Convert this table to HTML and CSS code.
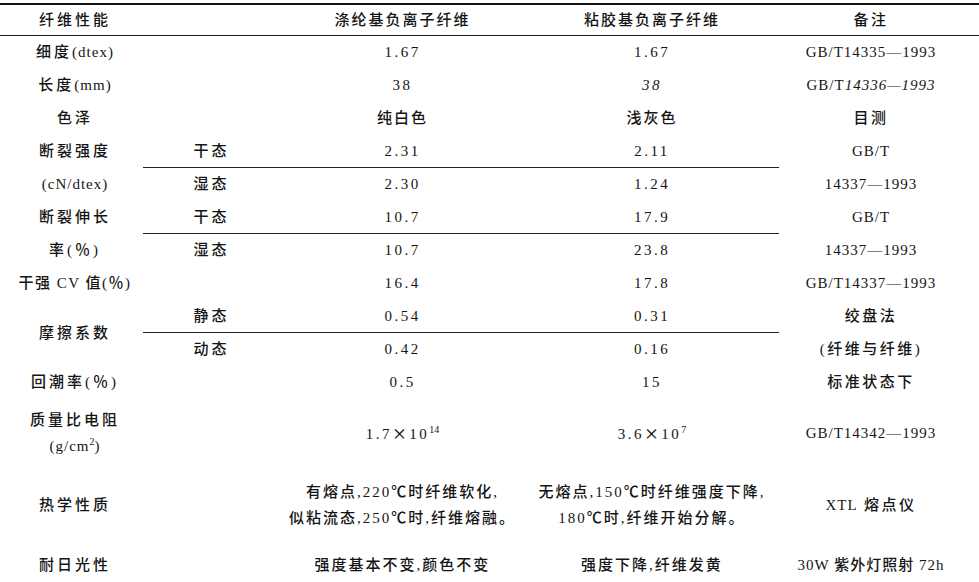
FILE: index.html
```html
<!DOCTYPE html>
<html lang="zh-CN">
<head>
<meta charset="utf-8">
<title>负离子纤维性能</title>
<link rel="stylesheet" href="styles.css">
</head>
<body>
<div class="table">
  <div class="c c1 hd">纤维性能</div>
  <div class="c c2 hd"></div>
  <div class="c c3 hd">涤纶基负离子纤维</div>
  <div class="c c4 hd">粘胶基负离子纤维</div>
  <div class="c c5 hd cj">备注</div>

  <div class="c c1"><span>细度<span class="lt">(dtex)</span></span></div>
  <div class="c c2"></div>
  <div class="c c3 num">1.67</div>
  <div class="c c4 num">1.67</div>
  <div class="c c5">GB/T14335—1993</div>

  <div class="c c1"><span>长度<span class="lt">(mm)</span></span></div>
  <div class="c c2"></div>
  <div class="c c3 num">38</div>
  <div class="c c4 num"><i>38</i></div>
  <div class="c c5"><span>GB/T<i>14336—1993</i></span></div>

  <div class="c c1">色泽</div>
  <div class="c c2"></div>
  <div class="c c3">纯白色</div>
  <div class="c c4">浅灰色</div>
  <div class="c c5 cj">目测</div>

  <div class="c c1">断裂强度</div>
  <div class="c c2 ln">干态</div>
  <div class="c c3 num ln">2.31</div>
  <div class="c c4 num ln">2.11</div>
  <div class="c c5">GB/T</div>

  <div class="c c1"><span class="lt">(cN/dtex)</span></div>
  <div class="c c2">湿态</div>
  <div class="c c3 num">2.30</div>
  <div class="c c4 num">1.24</div>
  <div class="c c5">14337—1993</div>

  <div class="c c1">断裂伸长</div>
  <div class="c c2 ln">干态</div>
  <div class="c c3 num ln">10.7</div>
  <div class="c c4 num ln">17.9</div>
  <div class="c c5">GB/T</div>

  <div class="c c1">率(％)</div>
  <div class="c c2">湿态</div>
  <div class="c c3 num">10.7</div>
  <div class="c c4 num">23.8</div>
  <div class="c c5">14337—1993</div>

  <div class="c c1 tight">干强 CV 值(％)</div>
  <div class="c c2"></div>
  <div class="c c3 num">16.4</div>
  <div class="c c4 num">17.8</div>
  <div class="c c5">GB/T14337—1993</div>

  <div class="c c1 span2">摩擦系数</div>
  <div class="c c2 ln">静态</div>
  <div class="c c3 num ln">0.54</div>
  <div class="c c4 num ln">0.31</div>
  <div class="c c5 cj">绞盘法</div>

  <div class="c c2">动态</div>
  <div class="c c3 num">0.42</div>
  <div class="c c4 num">0.16</div>
  <div class="c c5 cj">(纤维与纤维)</div>

  <div class="c c1">回潮率(％)</div>
  <div class="c c2"></div>
  <div class="c c3 num">0.5</div>
  <div class="c c4 num">15</div>
  <div class="c c5 cj">标准状态下</div>

  <div class="c c1 multi"><span>质量比电阻</span><span class="lt">(g/cm<sup>2</sup>)</span></div>
  <div class="c c2"></div>
  <div class="c c3 num"><span>1.7<span class="x">×</span>10<sup>14</sup></span></div>
  <div class="c c4 num"><span>3.6<span class="x">×</span>10<sup>7</sup></span></div>
  <div class="c c5">GB/T14342—1993</div>

  <div class="c c1">热学性质</div>
  <div class="c c2"></div>
  <div class="c c3 multi"><span>有熔点,220℃时纤维软化,</span><span>似粘流态,250℃时,纤维熔融。</span></div>
  <div class="c c4 multi"><span>无熔点,150℃时纤维强度下降,</span><span>180℃时,纤维开始分解。</span></div>
  <div class="c c5 cj"><span><span class="lt">XTL</span> 熔点仪</span></div>

  <div class="c c1">耐日光性</div>
  <div class="c c2"></div>
  <div class="c c3">强度基本不变,颜色不变</div>
  <div class="c c4">强度下降,纤维发黄</div>
  <div class="c c5 cj narrow"><span><span class="lt">30W</span> 紫外灯照射 <span class="lt">72h</span></span></div>
</div>
</body>
</html>
```

FILE: styles.css
```css
html, body {
  margin: 0;
  padding: 0;
  background: #ffffff;
  overflow: hidden;
}

body {
  color: #151515;
  font-family: "Liberation Serif", "Noto Sans CJK SC", serif;
  font-size: 15px;
  line-height: 1;
}

.table {
  margin-top: 3px;
  border-top: 2px solid #111;
  display: grid;
  grid-template-columns: 143px 142px 240px 254px 200px;
  grid-template-rows: 31px repeat(11, 33px) 68px 76px 44px;
}

.c {
  box-sizing: border-box;
  display: flex;
  align-items: center;
  justify-content: center;
  text-align: center;
  white-space: nowrap;
  letter-spacing: 2px;
  font-weight: 500;
}

.hd {
  border-bottom: 1px solid #1e1e1e;
}

.c1 {
  letter-spacing: 3px;
  padding-left: 7px;
}

.c1.tight {
  letter-spacing: 1.5px;
}

.c2 {
  padding-right: 5px;
  letter-spacing: 3px;
}

.c3 {
  padding-right: 5px;
}

.num {
  letter-spacing: 2.5px;
}

.c5 {
  padding-right: 16px;
  letter-spacing: 1px;
}

.c5.cj {
  letter-spacing: 2.5px;
}

.c5.cj.narrow {
  letter-spacing: 1px;
}

.lt {
  letter-spacing: 1px;
}

.x {
  font-family: "Noto Sans CJK SC", sans-serif;
  font-size: 15px;
  letter-spacing: 0;
  margin-right: 2px;
}

.ln {
  border-bottom: 1px solid #222;
}

.span2 {
  grid-row: span 2;
}

.multi {
  flex-direction: column;
  line-height: 26px;
}

.multi span {
  display: block;
}

sup {
  font-size: 10px;
  line-height: 0;
  vertical-align: 6px;
  letter-spacing: 0;
}

i {
  font-style: italic;
}
```
